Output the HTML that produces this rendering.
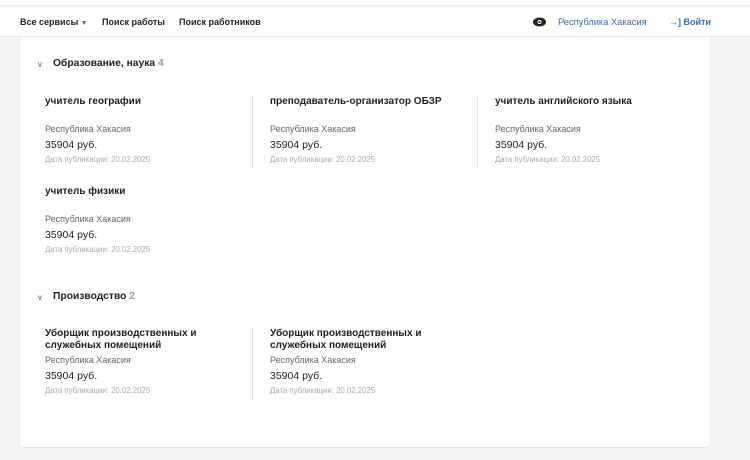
<!DOCTYPE html><html><head><meta charset="utf-8"><style>
*{margin:0;padding:0;box-sizing:border-box}
body{width:750px;height:460px;background:#f5f5f6;font-family:"Liberation Sans",sans-serif;position:relative;overflow:hidden;color:#222}
.top{position:absolute;left:0;top:0;width:750px;height:6px;background:#fff;border-bottom:1px solid #e6e6e6}
.hdr{position:absolute;left:0;top:7px;width:750px;height:30px;background:#fff;border-bottom:1px solid #e6e6e6;font-size:9px;font-weight:bold}
.hdr span{position:absolute;top:10px}
.card{position:absolute;left:19px;top:37px;width:692px;height:411px;background:#fff;border:1px solid #e8e8e8;border-top:none;border-radius:0 0 4px 4px}
.a{position:absolute;font-size:10.3px;font-weight:bold}
.a i{font-style:normal;color:#9a9a9a}
.chev{position:absolute;color:#3a6fb0;font-size:8px}
.j{position:absolute;width:210px}
.t{font-size:10px;font-weight:bold;line-height:12px;height:12px}
.r{font-size:9px;color:#666;margin-top:16px}
.s{font-size:10.5px;margin-top:5px}
.d{font-size:7.8px;color:#aaa;margin-top:4px}
.v{position:absolute;width:1px;background:#e3e3e3}
</style></head><body>
<div class="top"></div>
<div class="hdr">
<span style="left:20px">Все сервисы <b style="color:#3a6fb0;font-size:7px">▼</b></span>
<span style="left:102px">Поиск работы</span>
<span style="left:179px">Поиск работников</span>
<svg style="position:absolute;left:533px;top:10px" width="13" height="10" viewBox="0 0 13 10"><ellipse cx="6.5" cy="5" rx="6.5" ry="4.5" fill="#222"/><circle cx="6.5" cy="5" r="2" fill="#fff"/><circle cx="6.5" cy="5" r="1" fill="#222"/></svg>
<span style="left:558px;font-weight:normal;color:#3a6fb0;font-size:9.3px">Республика Хакасия</span>
<span style="left:669px;color:#3a6fb0">→] Войти</span>
</div>
<div class="card"></div>
<span class="chev" style="left:37px;top:60px">∨</span><div class="a" style="left:53px;top:58px">Образование, наука <i>4</i></div>
<div class="j" style="left:45px;top:96px"><div class="t">учитель географии</div><div class="r">Республика Хакасия</div><div class="s">35904 руб.</div><div class="d">Дата публикации: 20.02.2025</div></div>
<div class="v" style="left:252px;top:96px;height:72px"></div>
<div class="j" style="left:270px;top:96px"><div class="t">преподаватель-организатор ОБЗР</div><div class="r">Республика Хакасия</div><div class="s">35904 руб.</div><div class="d">Дата публикации: 20.02.2025</div></div>
<div class="v" style="left:477px;top:96px;height:72px"></div>
<div class="j" style="left:495px;top:96px"><div class="t">учитель английского языка</div><div class="r">Республика Хакасия</div><div class="s">35904 руб.</div><div class="d">Дата публикации: 20.02.2025</div></div>
<div class="j" style="left:45px;top:186px"><div class="t">учитель физики</div><div class="r">Республика Хакасия</div><div class="s">35904 руб.</div><div class="d">Дата публикации: 20.02.2025</div></div>
<span class="chev" style="left:37px;top:293px">∨</span><div class="a" style="left:53px;top:291px">Производство <i>2</i></div>
<div class="j" style="left:45px;top:328px"><div class="t" style="height:24px">Уборщик производственных и служебных помещений</div><div class="r" style="margin-top:3px">Республика Хакасия</div><div class="s">35904 руб.</div><div class="d">Дата публикации: 20.02.2025</div></div>
<div class="v" style="left:252px;top:328px;height:72px"></div>
<div class="j" style="left:270px;top:328px"><div class="t" style="height:24px">Уборщик производственных и служебных помещений</div><div class="r" style="margin-top:3px">Республика Хакасия</div><div class="s">35904 руб.</div><div class="d">Дата публикации: 20.02.2025</div></div>
</body></html>
